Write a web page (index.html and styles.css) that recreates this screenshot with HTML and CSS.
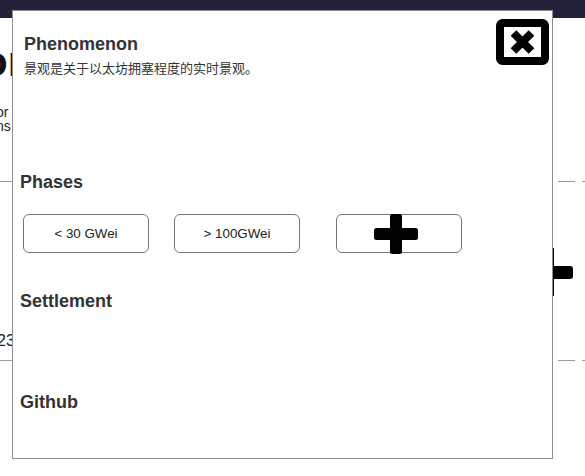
FILE: index.html
```html
<!DOCTYPE html>
<html lang="zh">
<head>
<meta charset="utf-8">
<title>Phenomenon</title>
<link rel="stylesheet" href="styles.css">
</head>
<body>
<header class="topbar"></header>
<div class="page">
  <div class="strip strip-left">
    <div class="bg-title">on</div>
    <p class="bg-text">or s<br>ns</p>
    <div class="bg-rule rule-1"></div>
    <div class="bg-num">23</div>
    <div class="bg-rule rule-2"></div>
  </div>
  <div class="strip strip-right">
    <div class="dash-row row-1"><span class="dash dash-a"></span><span class="dash dash-b"></span></div>
    <div class="handle"><span class="handle-knob"></span></div>
    <div class="dash-row row-2"><span class="dash dash-a"></span><span class="dash dash-b"></span></div>
  </div>
</div>

<div class="modal">
  <div class="modal-head">
    <div class="head-text">
      <h2 class="title">Phenomenon</h2>
      <p class="desc">景观是关于以太坊拥塞程度的实时景观。</p>
    </div>
    <button class="close" aria-label="close">
      <svg width="53" height="46" viewBox="0 0 53 46">
        <rect x="4" y="4" width="45" height="38" rx="2.5" fill="#fff" stroke="#000" stroke-width="8"/>
        <path d="M17.5 14 L35.5 32 M35.5 14 L17.5 32" stroke="#000" stroke-width="8" stroke-linecap="butt"/>
      </svg>
    </button>
  </div>

  <h3 class="section-title phases">Phases</h3>
  <div class="options">
    <button class="opt">&lt; 30 GWei</button>
    <button class="opt">&gt; 100GWei</button>
    <button class="opt opt-add" aria-label="add">
      <svg class="plus" width="44" height="40" viewBox="0 0 44 40">
        <rect x="0" y="14" width="44" height="12" rx="2.5" fill="#000"/>
        <rect x="16" y="0" width="12" height="40" rx="2.5" fill="#000"/>
      </svg>
    </button>
  </div>

  <h3 class="section-title settlement">Settlement</h3>
  <h3 class="section-title github">Github</h3>
</div>
</body>
</html>
```
FILE: styles.css
```css
html, body {
  margin: 0;
  padding: 0;
}
body {
  width: 585px;
  height: 476px;
  overflow: hidden;
  position: relative;
  background: #fff;
  font-family: "Liberation Sans", Arial, "Noto Sans CJK SC", sans-serif;
  color: #222;
}

.topbar {
  height: 18px;
  background: #24223a;
}

.page {
  display: flex;
  justify-content: space-between;
}

.strip {
  display: flex;
  flex-direction: column;
  overflow: hidden;
}
.strip-left {
  width: 12px;
}
.strip-right {
  width: 32px;
}

.bg-title {
  margin: 20px 0 0 -18px;
  font-size: 42px;
  line-height: 48px;
  font-weight: 700;
  color: #111;
  white-space: nowrap;
}
.bg-text {
  margin: 19px 0 0 -4px;
  font-size: 14px;
  line-height: 14px;
  color: #222;
  white-space: nowrap;
}
.bg-rule {
  height: 1px;
  background: #9a9a9a;
}
.rule-1 {
  margin-top: 48px;
}
.bg-num {
  margin: 150px 0 0 -3px;
  font-size: 16px;
  line-height: 18px;
  color: #222;
  white-space: nowrap;
}
.rule-2 {
  margin-top: 10px;
}

.dash-row {
  display: flex;
  height: 1px;
}
.row-1 {
  margin-top: 163px;
}
.row-2 {
  margin-top: 64px;
}
.dash {
  height: 1px;
  background: #9a9a9a;
}
.dash-a {
  width: 17px;
  margin-left: 5px;
}
.dash-b {
  flex: 1;
  margin-left: 7px;
}

.handle {
  margin-top: 66px;
  height: 48px;
  width: 20px;
  border-left: 1.5px solid #000;
  display: flex;
  align-items: flex-start;
}
.handle-knob {
  margin-top: 18px;
  width: 19px;
  height: 13px;
  background: #000;
  border-radius: 0 3px 3px 0;
}

.modal {
  position: absolute;
  left: 12px;
  top: 10px;
  width: 541px;
  height: 449px;
  box-sizing: border-box;
  border: 1px solid #8f8f8f;
  background: #fff;
  padding: 8px 3px 0 7px;
  display: flex;
  flex-direction: column;
  align-items: stretch;
}

.modal-head {
  display: flex;
  justify-content: space-between;
  align-items: flex-start;
}
.head-text {
  margin-top: 14px;
  padding-left: 4px;
}
.title {
  margin: 0;
  font-size: 18px;
  line-height: 22px;
  font-weight: 700;
  color: #333;
}
.desc {
  margin: 5px 0 0;
  font-size: 13px;
  line-height: 18px;
  color: #333;
  font-family: "Liberation Sans", "Noto Sans CJK SC", sans-serif;
}
.close {
  width: 53px;
  height: 46px;
  padding: 0;
  border: 0;
  background: none;
  display: block;
}
.close svg {
  display: block;
}

.section-title {
  margin: 0;
  font-size: 18px;
  line-height: 22px;
  font-weight: 700;
  color: #333;
}
.phases {
  margin-top: 93px;
}
.settlement {
  margin-top: 37px;
}
.github {
  margin-top: 79px;
}

.options {
  display: flex;
  gap: 25px;
  margin-top: 21px;
  padding-left: 3px;
}
.opt {
  width: 126px;
  height: 39px;
  box-sizing: border-box;
  border: 1px solid #767676;
  border-radius: 6px;
  background: #fff;
  font-family: "Liberation Sans", Arial, sans-serif;
  font-size: 13.33px;
  color: #222;
  padding: 0;
  display: flex;
  align-items: center;
  justify-content: center;
  overflow: visible;
}
.opt-add {
  margin-left: 11px;
}
.plus {
  display: block;
  flex: none;
  margin: 1px 6px 0 0;
}
```
